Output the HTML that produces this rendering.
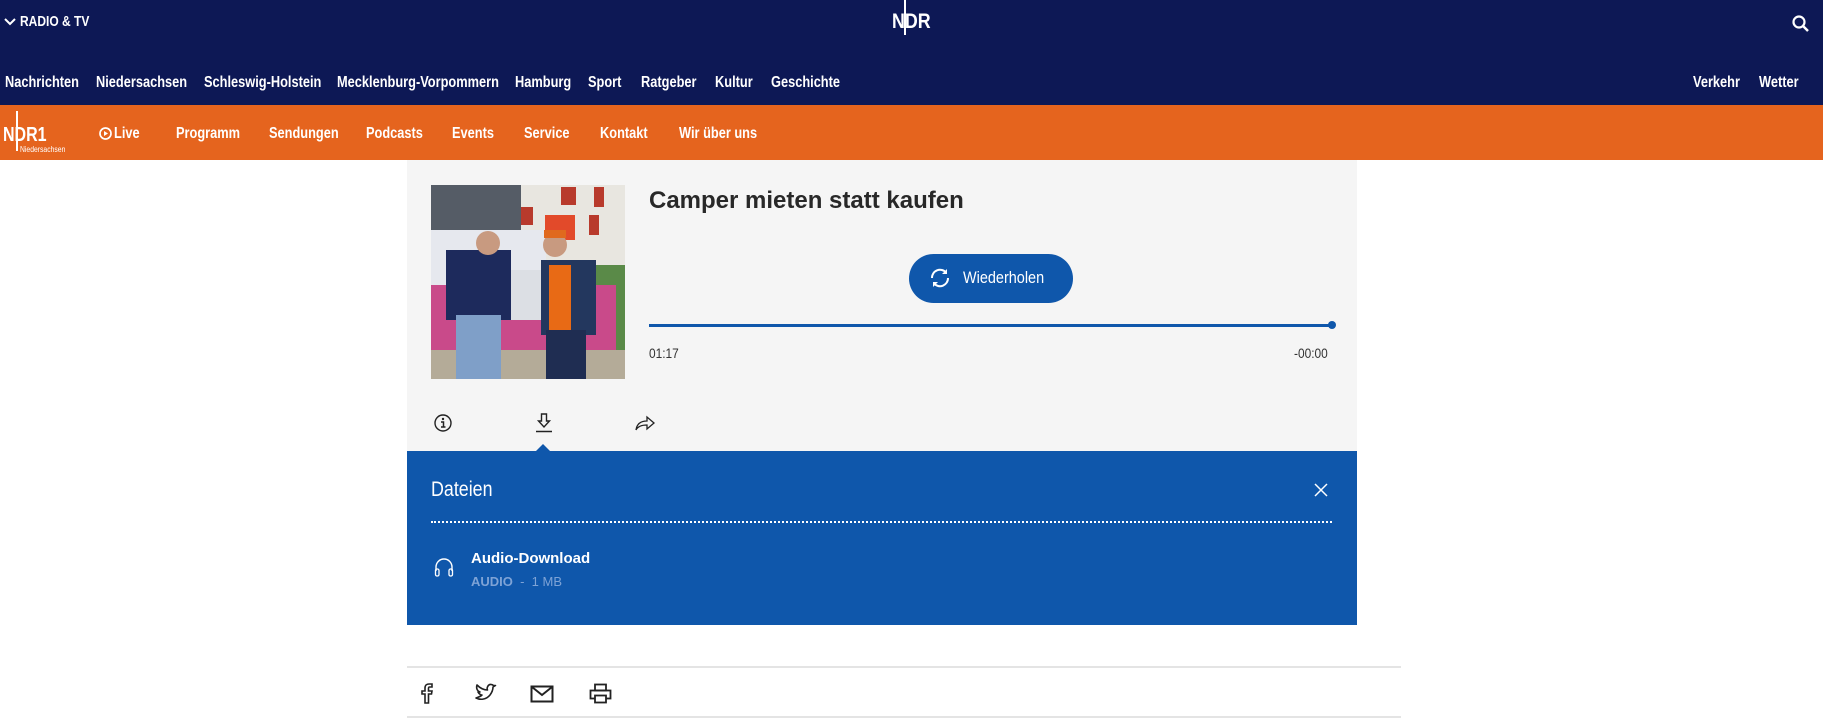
<!DOCTYPE html>
<html><head><meta charset="utf-8"><style>
*{margin:0;padding:0;box-sizing:border-box}
body{width:1823px;height:722px;background:#fff;position:relative;overflow:hidden;font-family:"Liberation Sans",sans-serif}
.a{position:absolute;white-space:nowrap}
.n{font-family:"Liberation Sans",sans-serif;font-weight:bold;color:#fff;font-size:16px;line-height:20px;transform:scaleX(0.8);transform-origin:0 0}
.c{transform:scaleX(0.85);transform-origin:0 0}
</style></head><body>
<div class="a" style="left:0;top:0;width:1823px;height:105px;background:#0d1855"></div>
<div class="a" style="left:0;top:105px;width:1823px;height:55px;background:#e5641e"></div>
<!-- top bar -->
<svg class="a" style="left:4px;top:17px" width="12" height="10"><path d="M1 2 L6 7 L11 2" stroke="#fff" stroke-width="2" fill="none"/></svg>
<div class="a n" style="left:20px;top:12px;font-size:15px">RADIO &amp; TV</div>
<div class="a" style="left:904px;top:0;width:2px;height:35px;background:#fff"></div>
<div class="a n" style="left:892px;top:11px;font-size:21px;line-height:22px;transform:scaleX(0.85)">NDR</div>
<svg class="a" style="left:1792px;top:15px" width="18" height="18"><circle cx="7" cy="7" r="5.5" stroke="#fff" stroke-width="2.2" fill="none"/><path d="M11 11 L16 16" stroke="#fff" stroke-width="2.5"/></svg>
<div class="a n" style="left:5px;top:73px">Nachrichten</div>
<div class="a n" style="left:96px;top:73px">Niedersachsen</div>
<div class="a n" style="left:204px;top:73px">Schleswig-Holstein</div>
<div class="a n" style="left:337px;top:73px">Mecklenburg-Vorpommern</div>
<div class="a n" style="left:515px;top:73px">Hamburg</div>
<div class="a n" style="left:588px;top:73px">Sport</div>
<div class="a n" style="left:641px;top:73px">Ratgeber</div>
<div class="a n" style="left:715px;top:73px">Kultur</div>
<div class="a n" style="left:771px;top:73px">Geschichte</div>
<div class="a n" style="left:1693px;top:73px">Verkehr</div>
<div class="a n" style="left:1759px;top:73px">Wetter</div>
<!-- orange bar -->
<div class="a" style="left:16px;top:111px;width:2px;height:40px;background:#fff"></div>
<div class="a n" style="left:3px;top:124px;font-size:20px;line-height:22px">NDR1</div>
<div class="a" style="left:20px;top:145px;color:#fff;font-size:8px;transform:scaleX(0.85);transform-origin:0 0">Niedersachsen</div>
<svg class="a" style="left:99px;top:127px" width="13" height="13"><circle cx="6.5" cy="6.5" r="5.5" stroke="#fff" stroke-width="1.7" fill="none"/><path d="M5 4 L9 6.5 L5 9Z" fill="#fff"/></svg>
<div class="a n" style="left:114px;top:124px">Live</div>
<div class="a n" style="left:176px;top:124px">Programm</div>
<div class="a n" style="left:269px;top:124px">Sendungen</div>
<div class="a n" style="left:366px;top:124px">Podcasts</div>
<div class="a n" style="left:452px;top:124px">Events</div>
<div class="a n" style="left:524px;top:124px">Service</div>
<div class="a n" style="left:600px;top:124px">Kontakt</div>
<div class="a n" style="left:679px;top:124px">Wir über uns</div>
<!-- gray panel -->
<div class="a" style="left:407px;top:160px;width:950px;height:291px;background:#f5f5f5"></div>
<svg class="a" style="left:431px;top:185px" width="194" height="194" viewBox="0 0 194 194">
<rect width="194" height="194" fill="#c9cfc8"/>
<rect x="88" y="0" width="106" height="90" fill="#e8e6e0"/>
<rect x="130" y="2" width="15" height="18" fill="#b83a2c"/><rect x="163" y="2" width="10" height="20" fill="#b83a2c"/><rect x="89" y="22" width="13" height="18" fill="#b83a2c"/><rect x="114" y="30" width="30" height="25" fill="#e24a2a"/><rect x="158" y="30" width="10" height="20" fill="#b83a2c"/>
<rect x="0" y="0" width="90" height="45" fill="#555c66"/>
<rect x="0" y="45" width="115" height="100" fill="#e6e8ee"/>
<rect x="150" y="80" width="44" height="85" fill="#5a8a48"/>
<rect x="0" y="100" width="185" height="70" fill="#c94a8a"/>
<rect x="0" y="165" width="194" height="29" fill="#b4ab98"/>
<rect x="65" y="85" width="100" height="50" fill="#dcdfe4"/>
<rect x="15" y="65" width="65" height="70" fill="#1d2a5c"/>
<rect x="25" y="130" width="45" height="64" fill="#7f9fc8"/>
<circle cx="57" cy="58" r="12" fill="#c89a80"/>
<rect x="110" y="75" width="55" height="75" fill="#23375e"/>
<rect x="118" y="80" width="22" height="65" fill="#e86a15"/>
<rect x="115" y="145" width="40" height="49" fill="#1f2d52"/>
<circle cx="124" cy="60" r="12" fill="#c89a80"/>
<rect x="113" y="45" width="22" height="8" fill="#e0691e"/>
</svg>
<div class="a" style="left:649px;top:187px;font-size:24px;font-weight:bold;color:#282828">Camper mieten statt kaufen</div>
<div class="a" style="left:909px;top:254px;width:164px;height:49px;border-radius:25px;background:#0f57ab"></div>
<svg class="a" style="left:928px;top:266px" width="24" height="24" viewBox="0 0 24 24"><path d="M4 12 A8 8 0 0 1 18 6.5 M20 12 A8 8 0 0 1 6 17.5" stroke="#fff" stroke-width="2" fill="none"/><path d="M19 3 L19 8 L14 8Z M5 21 L5 16 L10 16Z" fill="#fff"/></svg>
<div class="a c" style="left:963px;top:268px;color:#fff;font-size:17px">Wiederholen</div>
<div class="a" style="left:649px;top:324px;width:683px;height:3px;background:#0f57ab"></div>
<div class="a" style="left:1328px;top:321px;width:8px;height:8px;border-radius:50%;background:#0f57ab"></div>
<div class="a c" style="left:649px;top:345px;font-size:14px;color:#333">01:17</div>
<div class="a c" style="left:1294px;top:345px;font-size:14px;color:#333">-00:00</div>
<svg class="a" style="left:433px;top:413px" width="20" height="20"><circle cx="10" cy="10" r="8" stroke="#222" stroke-width="1.4" fill="none"/><circle cx="10" cy="6" r="1.2" fill="#222"/><path d="M8 9 H10.5 V14 M8 14 H12.5" stroke="#222" stroke-width="1.5" fill="none"/></svg>
<svg class="a" style="left:534px;top:412px" width="20" height="22"><path d="M7.5 2 H12.5 V9 H15.5 L10 15 L4.5 9 H7.5Z" stroke="#222" stroke-width="1.4" fill="none"/><path d="M2 19.5 H18" stroke="#222" stroke-width="1.5"/></svg>
<svg class="a" style="left:634px;top:413px" width="22" height="20"><path d="M2 17 C3 10 8 8 13 8 V4 L20 10 L13 16 V12 C8 12 4 13 2 17Z" stroke="#222" stroke-width="1.3" fill="none"/></svg>
<!-- blue panel -->
<div class="a" style="left:407px;top:451px;width:950px;height:174px;background:#0f57ab"></div>
<div class="a" style="left:536px;top:444px;width:0;height:0;border-left:7px solid transparent;border-right:7px solid transparent;border-bottom:7px solid #0f57ab"></div>
<div class="a c" style="left:431px;top:478px;color:#fff;font-size:21px">Dateien</div>
<svg class="a" style="left:1313px;top:482px" width="16" height="16"><path d="M2 2 L14 14 M14 2 L2 14" stroke="#fff" stroke-width="1.5"/></svg>
<div class="a" style="left:431px;top:521px;width:901px;border-top:2px dotted #fff"></div>
<svg class="a" style="left:433px;top:557px" width="22" height="20"><path d="M3 14 V10 A8 8 0 0 1 19 10 V14" stroke="#fff" stroke-width="1.4" fill="none"/><rect x="2.5" y="12" width="3.5" height="7" rx="1.5" stroke="#fff" stroke-width="1.3" fill="none"/><rect x="16" y="12" width="3.5" height="7" rx="1.5" stroke="#fff" stroke-width="1.3" fill="none"/></svg>
<div class="a" style="left:471px;top:550px;color:#fff;font-weight:bold;font-size:15px">Audio-Download</div>
<div class="a" style="left:471px;top:574px;color:#7ea3d6;font-size:13px"><b>AUDIO</b>&nbsp; - &nbsp;1 MB</div>
<!-- share bar -->
<div class="a" style="left:407px;top:666px;width:994px;height:2px;background:#e4e4e4"></div>
<div class="a" style="left:407px;top:716px;width:994px;height:2px;background:#e4e4e4"></div>
<svg class="a" style="left:418px;top:682px" width="18" height="22"><path d="M7 21 V12 H4 V9 H7 V6 C7 3 9 2 11 2 H14 V5 H11.5 C10.5 5 10.5 6 10.5 6.5 V9 H14 L13.5 12 H10.5 V21Z" stroke="#222" stroke-width="1.6" fill="none"/></svg>
<svg class="a" style="left:474px;top:683px" width="24" height="20"><path d="M2 15 C6 17 12 17 16 12 C19 8 19 5 19 4 L21.5 2.5 L19.5 2.5 C18 1 15 1 14 3 C13 4.5 13 6 13.5 7 C9 7 6 5 3 2 C2 5 3 8 6 9 H4 C5 11 7 12 8 12 C7 13 5 14 2 15Z" stroke="#222" stroke-width="1.6" fill="none" stroke-linejoin="round"/></svg>
<svg class="a" style="left:530px;top:685px" width="25" height="19"><rect x="1.5" y="1.5" width="21" height="15" stroke="#222" stroke-width="2" fill="none"/><path d="M2 2 L12 10 L22 2" stroke="#222" stroke-width="2" fill="none"/></svg>
<svg class="a" style="left:589px;top:683px" width="23" height="21"><rect x="6" y="1.5" width="11" height="6" stroke="#222" stroke-width="1.8" fill="none"/><rect x="1.5" y="7.5" width="20" height="8" stroke="#222" stroke-width="1.8" fill="none"/><rect x="6" y="12.5" width="11" height="7" stroke="#222" stroke-width="1.8" fill="#fff"/></svg>
</body></html>
